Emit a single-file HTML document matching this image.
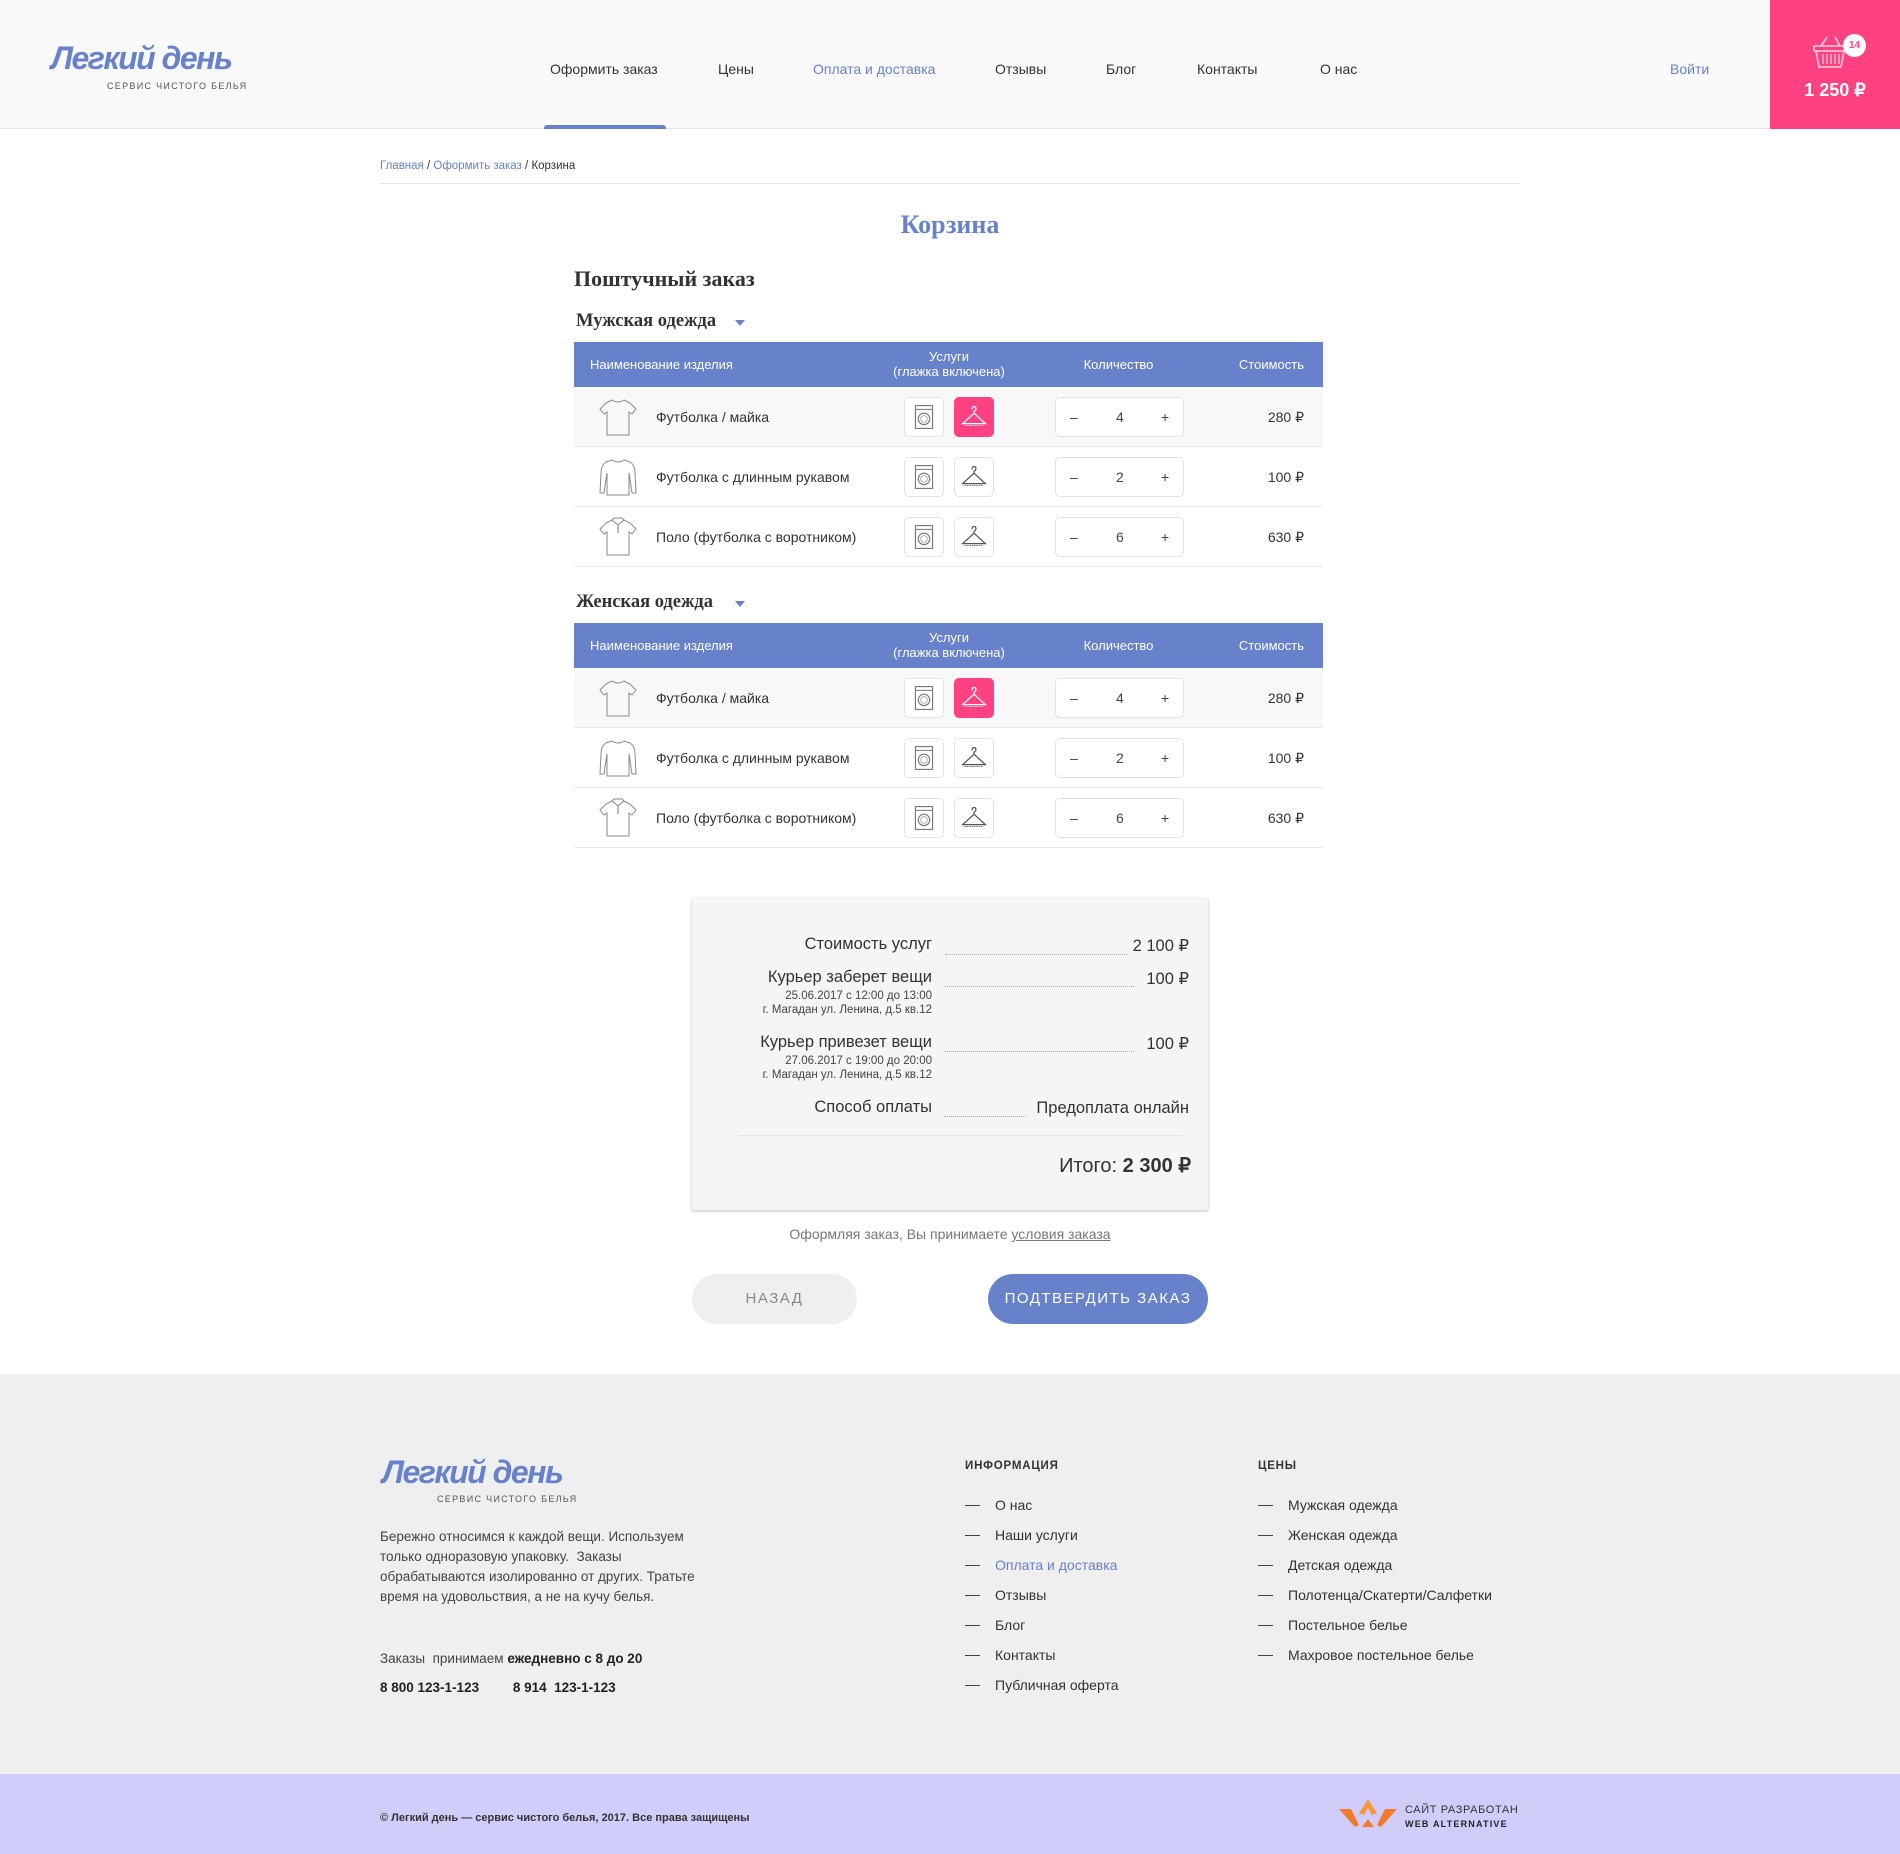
<!DOCTYPE html>
<html><head><meta charset="utf-8">
<style>
*{margin:0;padding:0;box-sizing:border-box}
body{width:1900px;height:1854px;position:relative;background:#fff;font-family:"Liberation Sans","Noto Sans CJK SC",sans-serif;color:#333;overflow:hidden}
.a{position:absolute;white-space:nowrap}
.hdr{position:absolute;left:0;top:0;width:1900px;height:129px;background:#f9f9f9;border-bottom:1px solid #e6e6e6}
.nav{position:absolute;top:61px;font-size:14px;color:#333}
.logo1{font-family:"Liberation Sans",sans-serif;font-weight:bold;font-style:italic;color:#6781cb;letter-spacing:-1.5px}
.logo2{font-size:9px;letter-spacing:1.3px;color:#555}
.serif{font-family:"Liberation Serif","Noto Serif CJK SC",serif;font-weight:bold}
.tbl{position:absolute;left:574px;width:749px}
.th{position:absolute;left:0;top:0;width:749px;height:45px;background:#6781cb;color:#fff;font-size:13px}
.row{position:absolute;left:0;width:749px;height:60px;border-bottom:1px solid #e8e8e8}
.row .nm{position:absolute;left:82px;top:22px;font-size:14px;color:#333}
.btn{position:absolute;top:10px;width:40px;height:40px;border:1px solid #e3e3e3;border-radius:5px;background:#fff}
.btn.on{background:#fe4180;border-color:#fe4180}
.qty{position:absolute;left:481px;top:10px;width:129px;height:40px;border:1px solid #e3e3e3;border-radius:5px;background:#fff;font-size:14px;color:#444}
.qty span{position:absolute;top:11px}
.pr{position:absolute;right:19px;top:22px;font-size:14px;color:#333}
.shirt{position:absolute;left:24px;top:10px}
.sum{position:absolute;left:692px;top:898px;width:516px;height:312px;background:#f5f5f5;box-shadow:0 1px 3px rgba(0,0,0,.25)}
.lb{position:absolute;right:276px;font-size:16.5px;color:#333;text-align:right}
.sm{position:absolute;right:276px;font-size:11.5px;color:#444;text-align:right}
.dots{position:absolute;border-bottom:1px dotted #aaa;height:1px}
.val{position:absolute;right:19px;font-size:16.5px;color:#333}
.fl{position:absolute;font-size:14px;color:#333}
.dash{position:absolute;width:15px;height:1px;background:#444}
</style></head><body>

<div class="hdr"></div>
<div class="a logo1" style="left:51px;top:40px;font-size:32px;">Легкий день</div>
<div class="a logo2" style="left:107px;top:81px;">СЕРВИС ЧИСТОГО БЕЛЬЯ</div>
<div class="a nav" style="left:550px">Оформить заказ</div>
<div class="a nav" style="left:718px">Цены</div>
<div class="a nav" style="left:813px;color:#6781cb">Оплата и доставка</div>
<div class="a nav" style="left:995px">Отзывы</div>
<div class="a nav" style="left:1106px">Блог</div>
<div class="a nav" style="left:1197px">Контакты</div>
<div class="a nav" style="left:1320px">О нас</div>
<div class="a" style="left:544px;top:125px;width:122px;height:4px;background:#6781cb;border-radius:3px 3px 0 0"></div>
<div class="a nav" style="left:1670px;color:#6781cb">Войти</div>
<div class="a" style="left:1770px;top:0;width:130px;height:129px;background:#fe4180"></div>
<svg class="a" style="left:1810px;top:34px" width="40" height="36" viewBox="0 0 40 36" fill="none" stroke="#ffd0e0" stroke-width="1.6"><path d="M11 12 L17 3 M25 3 L30 12"/><rect x="4" y="12" width="32" height="5" rx="1"/><path d="M6 17 L9 33 H31 L34 17"/><path d="M13 20v10M17 20v10M21 20v10M25 20v10M29 20v10" stroke-width="1.2"/></svg>
<div class="a" style="left:1843px;top:34px;width:23px;height:23px;border-radius:50%;background:#fff;color:#fe4180;font-size:10px;font-weight:bold;text-align:center;line-height:23px">14</div>
<div class="a" style="left:1770px;width:130px;top:80px;text-align:center;color:#fff;font-weight:bold;font-size:18px">1 250 ₽</div>

<div class="a" style="left:380px;top:160px;font-size:11.5px;color:#333"><span style="color:#6781cb">Главная</span> / <span style="color:#6781cb">Оформить заказ</span> / Корзина</div>
<div class="a" style="left:380px;top:183px;width:1140px;height:1px;background:#e6e6e6"></div>

<div class="a serif" style="left:0;width:1900px;text-align:center;top:210px;font-size:26px;color:#6781cb">Корзина</div>
<div class="a serif" style="left:574px;top:266px;font-size:22px;color:#333">Поштучный заказ</div>

<div class="a serif" style="left:576px;top:311px;font-size:18.5px;color:#333">Мужская одежда</div>
<div class="a" style="left:735px;top:320px;border:5px solid transparent;border-top:6px solid #6781cb"></div>

<div class="a serif" style="left:576px;top:592px;font-size:18.5px;color:#333">Женская одежда</div>
<div class="a" style="left:735px;top:601px;border:5px solid transparent;border-top:6px solid #6781cb"></div>

<svg width="0" height="0" style="position:absolute">
<defs>
<symbol id="tee" viewBox="0 0 40 40"><path d="M14 3 L8 6 L2 12 L6 17 L9 15 L9 38 L31 38 L31 15 L34 17 L38 12 L32 6 L26 3 Q20 7 14 3Z" fill="none" stroke="#888" stroke-width="1"/></symbol>
<symbol id="long" viewBox="0 0 40 40"><path d="M14 3 L8 5 Q3 8 3 16 L2 36 L6 36 L9 16 L9 38 L31 38 L31 16 L34 36 L38 36 L37 16 Q37 8 32 5 L26 3 Q20 7 14 3Z" fill="none" stroke="#888" stroke-width="1"/></symbol>
<symbol id="polo" viewBox="0 0 40 40"><path d="M14 3 L8 6 L2 12 L6 17 L9 15 L9 38 L31 38 L31 15 L34 17 L38 12 L32 6 L26 3 L20 8 Z M14 3 L16 1 H24 L26 3 M20 8 V16" fill="none" stroke="#888" stroke-width="1"/><circle cx="20" cy="11" r=".8" fill="#888"/><circle cx="20" cy="14" r=".8" fill="#888"/></symbol>
<symbol id="wash" viewBox="0 0 40 40"><rect x="11" y="8" width="18" height="24" fill="none" stroke="#777" stroke-width="1.2"/><path d="M11 12 H29" stroke="#777"/><circle cx="20" cy="22" r="6" fill="none" stroke="#777" stroke-width="1.2"/><circle cx="20" cy="22" r="3.5" fill="none" stroke="#999" stroke-width=".8"/></symbol>
<symbol id="hang" viewBox="0 0 40 40"><path d="M18 12 Q18 9 20 9 Q22 9 22 11 Q22 13 20 14 L20 16 L8 27 H32 L20 16" fill="none" stroke="currentColor" stroke-width="1.3"/><path d="M10 29 H30" stroke="currentColor" stroke-width="1" stroke-dasharray="1.5 1"/></symbol>
</defs></svg>

<!-- table 1 -->
<div class="tbl" style="top:342px">
 <div class="th"><span class="a" style="left:16px;top:15px">Наименование изделия</span><span class="a" style="left:300px;width:150px;text-align:center;top:7px;line-height:15px">Услуги<br>(глажка включена)</span><span class="a" style="left:480px;width:129px;text-align:center;top:15px">Количество</span><span class="a" style="right:19px;top:15px">Стоимость</span></div>
 <div class="row" style="top:45px;background:#f8f8f8"><svg class="shirt" width="40" height="40"><use href="#tee"/></svg><span class="nm">Футболка / майка</span><div class="btn" style="left:330px"><svg width="38" height="38"><use href="#wash"/></svg></div><div class="btn on" style="left:380px;color:#fff"><svg width="38" height="38"><use href="#hang"/></svg></div><div class="qty"><span style="left:14px">–</span><span style="left:60px">4</span><span style="left:105px">+</span></div><span class="pr">280 ₽</span></div>
 <div class="row" style="top:105px"><svg class="shirt" width="40" height="40"><use href="#long"/></svg><span class="nm">Футболка с длинным рукавом</span><div class="btn" style="left:330px"><svg width="38" height="38"><use href="#wash"/></svg></div><div class="btn" style="left:380px;color:#555"><svg width="38" height="38"><use href="#hang"/></svg></div><div class="qty"><span style="left:14px">–</span><span style="left:60px">2</span><span style="left:105px">+</span></div><span class="pr">100 ₽</span></div>
 <div class="row" style="top:165px"><svg class="shirt" width="40" height="40"><use href="#polo"/></svg><span class="nm">Поло (футболка с воротником)</span><div class="btn" style="left:330px"><svg width="38" height="38"><use href="#wash"/></svg></div><div class="btn" style="left:380px;color:#555"><svg width="38" height="38"><use href="#hang"/></svg></div><div class="qty"><span style="left:14px">–</span><span style="left:60px">6</span><span style="left:105px">+</span></div><span class="pr">630 ₽</span></div>
</div>

<!-- table 2 -->
<div class="tbl" style="top:623px">
 <div class="th"><span class="a" style="left:16px;top:15px">Наименование изделия</span><span class="a" style="left:300px;width:150px;text-align:center;top:7px;line-height:15px">Услуги<br>(глажка включена)</span><span class="a" style="left:480px;width:129px;text-align:center;top:15px">Количество</span><span class="a" style="right:19px;top:15px">Стоимость</span></div>
 <div class="row" style="top:45px;background:#f8f8f8"><svg class="shirt" width="40" height="40"><use href="#tee"/></svg><span class="nm">Футболка / майка</span><div class="btn" style="left:330px"><svg width="38" height="38"><use href="#wash"/></svg></div><div class="btn on" style="left:380px;color:#fff"><svg width="38" height="38"><use href="#hang"/></svg></div><div class="qty"><span style="left:14px">–</span><span style="left:60px">4</span><span style="left:105px">+</span></div><span class="pr">280 ₽</span></div>
 <div class="row" style="top:105px"><svg class="shirt" width="40" height="40"><use href="#long"/></svg><span class="nm">Футболка с длинным рукавом</span><div class="btn" style="left:330px"><svg width="38" height="38"><use href="#wash"/></svg></div><div class="btn" style="left:380px;color:#555"><svg width="38" height="38"><use href="#hang"/></svg></div><div class="qty"><span style="left:14px">–</span><span style="left:60px">2</span><span style="left:105px">+</span></div><span class="pr">100 ₽</span></div>
 <div class="row" style="top:165px"><svg class="shirt" width="40" height="40"><use href="#polo"/></svg><span class="nm">Поло (футболка с воротником)</span><div class="btn" style="left:330px"><svg width="38" height="38"><use href="#wash"/></svg></div><div class="btn" style="left:380px;color:#555"><svg width="38" height="38"><use href="#hang"/></svg></div><div class="qty"><span style="left:14px">–</span><span style="left:60px">6</span><span style="left:105px">+</span></div><span class="pr">630 ₽</span></div>
</div>

<!-- summary -->
<div class="sum">
 <span class="lb" style="top:37px">Стоимость услуг</span><div class="dots" style="left:253px;width:182px;top:56px"></div><span class="val" style="top:38px">2 100 ₽</span>
 <span class="lb" style="top:70px">Курьер заберет вещи</span><div class="dots" style="left:253px;width:189px;top:88px"></div><span class="val" style="top:71px">100 ₽</span>
 <span class="sm" style="top:92px">25.06.2017 с 12:00 до 13:00</span>
 <span class="sm" style="top:106px">г. Магадан ул. Ленина, д.5 кв.12</span>
 <span class="lb" style="top:135px">Курьер привезет вещи</span><div class="dots" style="left:253px;width:189px;top:153px"></div><span class="val" style="top:136px">100 ₽</span>
 <span class="sm" style="top:157px">27.06.2017 с 19:00 до 20:00</span>
 <span class="sm" style="top:171px">г. Магадан ул. Ленина, д.5 кв.12</span>
 <span class="lb" style="top:200px">Способ оплаты</span><div class="dots" style="left:252px;width:82px;top:218px"></div><span class="val" style="top:201px">Предоплата онлайн</span>
 <div class="a" style="left:45px;top:237px;width:445px;height:1px;background:#e4e4e4"></div>
 <span class="a" style="right:17px;top:255px;font-size:20px;color:#333">Итого: <b>2 300 ₽</b></span>
</div>
<div class="a" style="left:0;width:1900px;text-align:center;top:1226px;font-size:14px;color:#777">Оформляя заказ, Вы принимаете <span style="text-decoration:underline">условия заказа</span></div>
<div class="a" style="left:692px;top:1274px;width:165px;height:50px;border-radius:25px;background:#efefef;color:#888;font-size:15px;letter-spacing:1.5px;text-align:center;line-height:50px">НАЗАД</div>
<div class="a" style="left:988px;top:1274px;width:220px;height:50px;border-radius:25px;background:#6781cb;color:#fff;font-size:15px;letter-spacing:1.5px;text-align:center;line-height:50px">ПОДТВЕРДИТЬ ЗАКАЗ</div>

<!-- footer -->
<div class="a" style="left:0;top:1374px;width:1900px;height:400px;background:#efefef"></div>
<div class="a logo1" style="left:382px;top:1454px;font-size:32px;">Легкий день</div>
<div class="a logo2" style="left:437px;top:1494px;">СЕРВИС ЧИСТОГО БЕЛЬЯ</div>
<div class="a" style="left:380px;top:1527px;font-size:13.5px;line-height:20px;color:#444;white-space:normal;width:328px">Бережно относимся к каждой вещи. Используем только одноразовую упаковку.&nbsp; Заказы обрабатываются изолированно от других. Тратьте время на удовольствия, а не на кучу белья.</div>
<div class="a" style="left:380px;top:1651px;font-size:13.5px;color:#444">Заказы&nbsp; принимаем <b style="color:#222">ежедневно с 8 до 20</b></div>
<div class="a" style="left:380px;top:1680px;font-size:13.5px;font-weight:bold;color:#222">8 800 123-1-123 <span style="margin-left:30px">8 914&nbsp; 123-1-123</span></div>

<div class="a" style="left:965px;top:1460px;font-size:11.5px;font-weight:bold;letter-spacing:.8px;color:#333">ИНФОРМАЦИЯ</div>
<div class="dash" style="left:965px;top:1505px"></div><div class="fl" style="left:995px;top:1497px">О нас</div>
<div class="dash" style="left:965px;top:1535px"></div><div class="fl" style="left:995px;top:1527px">Наши услуги</div>
<div class="dash" style="left:965px;top:1565px"></div><div class="fl" style="left:995px;top:1557px;color:#6781cb">Оплата и доставка</div>
<div class="dash" style="left:965px;top:1595px"></div><div class="fl" style="left:995px;top:1587px">Отзывы</div>
<div class="dash" style="left:965px;top:1625px"></div><div class="fl" style="left:995px;top:1617px">Блог</div>
<div class="dash" style="left:965px;top:1655px"></div><div class="fl" style="left:995px;top:1647px">Контакты</div>
<div class="dash" style="left:965px;top:1685px"></div><div class="fl" style="left:995px;top:1677px">Публичная оферта</div>

<div class="a" style="left:1258px;top:1460px;font-size:11.5px;font-weight:bold;letter-spacing:.8px;color:#333">ЦЕНЫ</div>
<div class="dash" style="left:1258px;top:1505px"></div><div class="fl" style="left:1288px;top:1497px">Мужская одежда</div>
<div class="dash" style="left:1258px;top:1535px"></div><div class="fl" style="left:1288px;top:1527px">Женская одежда</div>
<div class="dash" style="left:1258px;top:1565px"></div><div class="fl" style="left:1288px;top:1557px">Детская одежда</div>
<div class="dash" style="left:1258px;top:1595px"></div><div class="fl" style="left:1288px;top:1587px">Полотенца/Скатерти/Салфетки</div>
<div class="dash" style="left:1258px;top:1625px"></div><div class="fl" style="left:1288px;top:1617px">Постельное белье</div>
<div class="dash" style="left:1258px;top:1655px"></div><div class="fl" style="left:1288px;top:1647px">Махровое постельное белье</div>

<div class="a" style="left:0;top:1774px;width:1900px;height:80px;background:#d0cdfb"></div>
<div class="a" style="left:380px;top:1812px;font-size:11px;font-weight:bold;color:#333">© Легкий день — сервис чистого белья, 2017. Все права защищены</div>
<svg class="a" style="left:1339px;top:1797px" width="58" height="32" viewBox="0 0 58 32"><path d="M0 12 L12 12 L20 28 L16 30 Z" fill="#f07a2a"/><path d="M58 12 L46 12 L38 28 L42 30 Z" fill="#f07a2a"/><path d="M29 2 L38 16 L33 18 L29 11 L25 18 L20 16 Z" fill="#f59a3a"/><path d="M29 22 L35 30 H23 Z" fill="#f07a2a"/></svg>
<div class="a" style="left:1405px;top:1804px;font-size:11px;letter-spacing:.6px;color:#333">САЙТ РАЗРАБОТАН</div>
<div class="a" style="left:1405px;top:1819px;font-size:9px;font-weight:bold;letter-spacing:1.2px;color:#222">WEB ALTERNATIVE</div>
</body></html>
